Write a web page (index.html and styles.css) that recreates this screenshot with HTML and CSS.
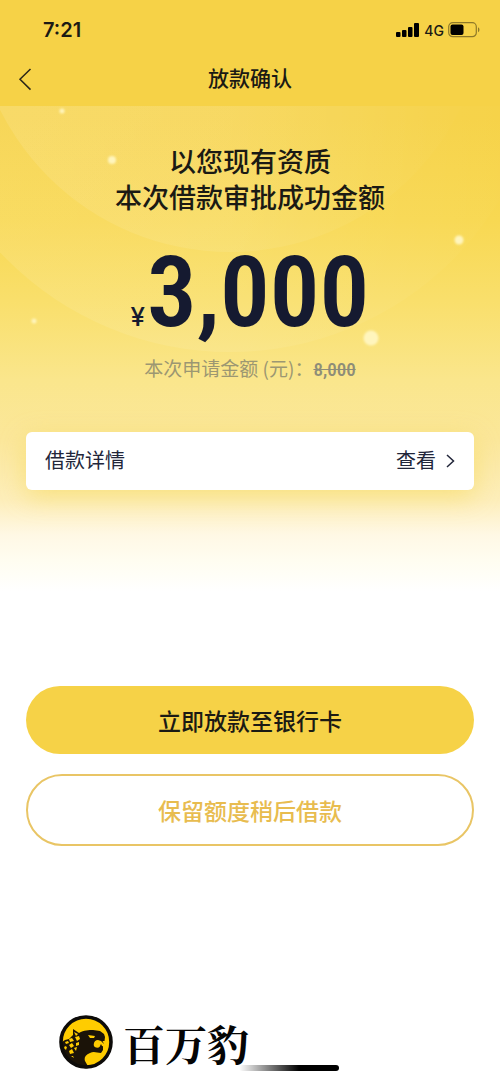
FILE: index.html
```html
<!DOCTYPE html>
<html lang="zh-CN">
<head>
<meta charset="utf-8">
<meta name="viewport" content="width=device-width, initial-scale=1">
<title>放款确认</title>
<link rel="stylesheet" href="styles.css">
</head>
<body>
<div class="page">
  <div class="status-bar">
    <span class="time">7:21</span>
    <span class="indicators">
      <svg class="signal" width="24" height="14" viewBox="0 0 24 14" aria-hidden="true">
        <rect x="0" y="9" width="4.500" height="5" rx="1"/><rect x="6" y="7" width="4.500" height="7" rx="1"/><rect x="12" y="4" width="4.500" height="10" rx="1"/><rect x="18" y="0" width="5" height="14" rx="1"/>
      </svg>
      <span class="network">4G</span>
      <svg width="32" height="16" viewBox="0 0 32 16" aria-hidden="true">
        <rect x=".7" y=".7" width="27.6" height="14" rx="4" fill="none" stroke="#8e7929" stroke-width="1.2"/>
        <rect x="2.5" y="2.5" width="13" height="10.5" rx="2"/>
        <path d="M30 5.2c2 1 2 4 0 5z" fill="#8e7929"/>
      </svg>
    </span>
  </div>
  <header class="nav">
    <button class="back" type="button" aria-label="返回">
      <svg width="14" height="24" viewBox="0 0 14 24" aria-hidden="true"><path d="M12.500 2 2 12.300l10.500 10.300" fill="none" stroke="#2b2618" stroke-width="1.500"/></svg>
    </button>
    <h1 class="title">放款确认</h1>
  </header>
  <main class="content">
    <svg class="backdrop" viewBox="0 0 500 300" aria-hidden="true">
      <defs>
        <linearGradient id="glow" x1="0" y1="0" x2="1" y2="0">
          <stop offset="0" stop-color="#fff" stop-opacity=".1"/>
          <stop offset=".5" stop-color="#fff" stop-opacity=".08"/>
          <stop offset="1" stop-color="#fff" stop-opacity="0"/>
        </linearGradient>
        <filter id="soft" x="-50%" y="-50%" width="200%" height="200%"><feGaussianBlur stdDeviation="1"/></filter>
      </defs>
      <circle cx="230" cy="-69" r="315" fill="url(#glow)"/>
      <circle cx="230" cy="-111" r="257" fill="url(#glow)"/>
      <g fill="#fff5bd" filter="url(#soft)">
        <circle cx="62" cy="5" r="2.500"/><circle cx="112" cy="54" r="4"/><circle cx="459" cy="134" r="4.500"/><circle cx="34" cy="215" r="2.500"/><circle cx="371" cy="232" r="7.500"/>
      </g>
    </svg>
    <h2 class="headline">以您现有资质<br>本次借款审批成功金额</h2>
    <p class="amount"><span class="currency">¥</span><span class="figure">3,000</span></p>
    <p class="applied">本次申请金额 (元)：<s class="old">8,000</s></p>
    <button class="details" type="button">
      <span>借款详情</span>
      <span class="view">查看
        <svg width="9" height="14" viewBox="0 0 9 14" aria-hidden="true"><path d="m1 1 6.500 6L1 13" fill="none" stroke="#22263a" stroke-width="1.500"/></svg>
      </span>
    </button>
    <div class="actions">
      <button class="btn primary" type="button">立即放款至银行卡</button>
      <button class="btn outline" type="button">保留额度稍后借款</button>
    </div>
  </main>
  <footer class="footer">
    <svg width="54" height="54" viewBox="0 0 54 54" aria-hidden="true">
      <circle cx="27" cy="27" r="25" fill="#fc0"/>
      <path d="M3 27 6 25 10 24 14 20 14 14 20 18C25 15 30 15 34 15L41 16 45 19 46 22 45.500 26 42 26 39 25C36 25 34 28 35 31 36 33 39 33 41 32L44 31 44 35 42 38C38 38 35 36 31 38 26 40 25 43 26 46L30 53C16 55 3 44 3 27z" fill="#1b1308"/>
      <path d="m29 20 7 1-1 2-4 0z" fill="#fc0"/>
      <path d="m43 25 2 4-3-3zM40 33l2-4 2 4z" fill="#1b1308"/>
      <path d="m15 17 4 2-2 2zM6 27l3-1 1 2-3 1zM10 24l3-1 2 3-4 1zM16 22l4-1 1 3-3 2zM10 30l3-2 2 3-3 2zM17 28l3-1v3l-3 1zM6 31l2 1-1 3-2-2zM10 36l3-2 2 4-4 1zM15 33l3-1-1 4zM12 41l2 0 1 2z" fill="#fc0"/>
      <circle cx="27" cy="27" r="25" fill="none" stroke="#0d0b09" stroke-width="3.600"/>
    </svg>
    <span class="brand">百万豹</span>
    <span class="home-bar"></span>
  </footer>
</div>
</body>
</html>
```
FILE: styles.css
```css
* { box-sizing: border-box; }
body {
  margin: 0;
  background: #fff;
  color: #1b1a14;
  font-family: Inter, "Noto Sans CJK SC", sans-serif;
}
h1, h2, p { margin: 0; }
button { font: inherit; color: inherit; border: 0; background: none; padding: 0; cursor: pointer; }
svg { display: block; flex: none; }
.page {
  min-height: 100vh;
  display: flex;
  flex-direction: column;
  background: linear-gradient(#f6d247 0, #f6d247 120px, #f8d852 220px, #f9df6b 300px, #fae68c 380px, #fbe79b 440px, #fdeebb 500px, #fff8e5 535px, #fffdf0 560px, #fff 592px);
}
.status-bar {
  height: 60px;
  padding: 0 20px 0 43px;
  display: flex;
  align-items: center;
  justify-content: space-between;
}
.time { font-size: 20px; font-weight: 600; }
.indicators { display: flex; align-items: center; gap: 4px; }
.network { font-size: 14px; font-weight: 500; }
.nav {
  height: 46px;
  padding: 0 18px 8px;
  display: grid;
  grid-template-columns: 24px 1fr 24px;
  align-items: center;
}
.title { font-size: 21px; line-height: 32px; font-weight: 500; text-align: center; }
.content {
  position: relative;
  padding: 39px 26px 0;
  display: flex;
  flex-direction: column;
}
.backdrop { position: absolute; top: 0; left: 0; width: 100%; overflow: hidden; }
.headline, .amount, .applied, .details { position: relative; }
.headline { font-size: 27px; line-height: 36px; font-weight: 500; text-align: center; }
.amount {
  height: 104px;
  margin-top: 22px;
  display: flex;
  justify-content: center;
  align-items: baseline;
  gap: 2px;
  color: #151a30;
  line-height: 106px;
}
.currency { font-size: 26px; font-weight: 500; }
.figure { font-family: "Roboto Condensed", Roboto, sans-serif; font-size: 99px; font-weight: 600; }
.applied {
  margin-top: 10px;
  font-family: "Noto Sans CJK SC", sans-serif;
  font-size: 19px;
  line-height: 30px;
  font-weight: 400;
  color: #9c9772;
  text-align: center;
}
.old { font-family: "Roboto Condensed", Roboto, sans-serif; font-weight: 500; color: #8e8d78; }
.details {
  margin-top: 47px;
  height: 58px;
  padding: 0 19px;
  display: flex;
  align-items: center;
  justify-content: space-between;
  border-radius: 6px;
  background: #fff;
  box-shadow: 0 6px 26px #f7dc66bb;
  color: #22263a;
  font-size: 20px;
  line-height: 30px;
}
.view { display: flex; align-items: center; gap: 10px; }
.actions { margin-top: 196px; display: grid; gap: 20px; }
.btn { height: 68px; border-radius: 36px; font-size: 23px; font-weight: 500; }
.primary { background: #f6d247; }
.outline { height: 72px; border: 2px solid #e9c565; color: #e8bc4f; background: #fff; }
.footer {
  margin-top: auto;
  padding: 0 0 10px 59px;
  display: flex;
  align-items: center;
}
.footer svg { margin-bottom: 2px; }
.brand {
  margin-left: 10px;
  font-family: "Noto Serif CJK SC", "Noto Sans CJK SC", serif;
  font-size: 42px;
  line-height: 52px;
  font-weight: 700;
  color: #050505;
}
.home-bar {
  align-self: flex-end;
  width: 100px;
  height: 6px;
  margin-left: -10px;
  border-radius: 3px;
  background: linear-gradient(90deg, #0000, #000 60%);
}
```
